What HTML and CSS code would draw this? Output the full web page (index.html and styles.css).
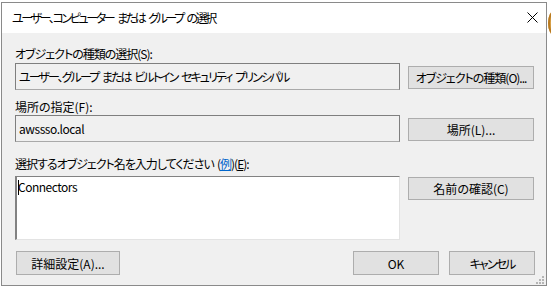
FILE: index.html
```html
<!DOCTYPE html>
<html lang="ja">
<head>
  <meta charset="UTF-8">
  <title>ユーザー、コンピューター または グループ の選択</title>
  <link rel="stylesheet" href="styles.css">
</head>
<body>

  <div class="dialogo">
    <div class="barra-titulo">
      <span class="titulo">ユーザー、コンピューター または グループ の選択</span>
      <svg class="cerrar" width="11" height="11" viewBox="0 0 11 11">
        <path d="M0.5 0.5 L10.5 10.5 M10.5 0.5 L0.5 10.5" stroke="#000" stroke-width="1" fill="none"/>
      </svg>
    </div>

    <div class="cuerpo">
      <div class="etiqueta etiqueta-1">オブジェクトの種類の選択(S):</div>
      <div class="fila">
        <div class="campo campo-tipo">ユーザー、グループ または ビルトイン セキュリティ プリンシパル</div>
        <button class="boton boton-lado boton-tipo">オブジェクトの種類(O)...</button>
      </div>

      <div class="etiqueta etiqueta-2">場所の指定(F):</div>
      <div class="fila">
        <div class="campo campo-latin">awssso.local</div>
        <button class="boton boton-lado">場所(L)...</button>
      </div>

      <div class="etiqueta etiqueta-3">選択するオブジェクト名を入力してください (<a class="enlace">例</a>)(<u>E</u>):</div>
      <div class="fila">
        <div class="area"><span class="cursor"></span>Connectors</div>
        <button class="boton boton-lado boton-nombre">名前の確認(C)</button>
      </div>

      <div class="pie">
        <button class="boton boton-detalle">詳細設定(A)...</button>
        <div class="pie-derecha">
          <button class="boton boton-ok">OK</button>
          <button class="boton boton-ok boton-cancelar">キャンセル</button>
        </div>
      </div>

      <svg class="agarre" width="8" height="8" viewBox="0 0 8 8">
        <rect x="6" y="0" width="2" height="2" fill="#b5b5b5"/>
        <rect x="3" y="3" width="2" height="2" fill="#b5b5b5"/>
        <rect x="6" y="3" width="2" height="2" fill="#b5b5b5"/>
        <rect x="0" y="6" width="2" height="2" fill="#b5b5b5"/>
        <rect x="3" y="6" width="2" height="2" fill="#b5b5b5"/>
        <rect x="6" y="6" width="2" height="2" fill="#b5b5b5"/>
      </svg>
    </div>
  </div>

  <div class="icono-fondo"></div>

</body>
</html>
```

FILE: styles.css
```css
/* --- General --- */
body {
  font-family: "Noto Sans CJK JP", "Noto Sans", sans-serif;
  font-size: 12px;
  font-feature-settings: "palt";
  color: #000;
  background: #fff;
  margin: 0;
  position: relative;
  height: 289px;
  overflow: hidden;
}

/* --- Ventana --- */
.dialogo {
  margin: 2px 0 0 1px;
  width: 546px;
  height: 284px;
  box-sizing: border-box;
  border: 1px solid #8a8a8a;
  display: flex;
  flex-direction: column;
}

.barra-titulo {
  height: 30px;
  background: #fff;
  display: flex;
  align-items: center;
  padding: 0 0 1px 10px;
  box-sizing: border-box;
}
/* la fuente de Windows tiene katakana mas estrechas: se compensa con letter-spacing */
.titulo {
  letter-spacing: -2.4px;
  word-spacing: 3.5px;
  white-space: nowrap;
}
.cerrar {
  margin-left: auto;
  margin-right: 8px;
}

.cuerpo {
  flex: 1;
  background: #f0f0f0;
  padding: 13px 11px 0 13px;
  position: relative;
}

.etiqueta {
  line-height: 16px;
  height: 16px;
  margin-bottom: 1px;
  white-space: nowrap;
}
.etiqueta-1 {
  letter-spacing: -1px;
}
.etiqueta-2 {
  margin-top: 9px;
  margin-bottom: 0;
}
.etiqueta-3 {
  margin-top: 14px;
  margin-bottom: 4px;
  letter-spacing: -1px;
  word-spacing: 1.5px;
}
.enlace {
  color: #0066cc;
  text-decoration: underline;
}

.fila {
  display: flex;
  align-items: flex-start;
  gap: 8px;
}

.campo {
  width: 385px;
  height: 27px;
  box-sizing: border-box;
  border: 1px solid #7f7f7f;
  border-bottom-color: #a9a9a9;
  background: #f0f0f0;
  line-height: 25px;
  padding-left: 3px;
  white-space: nowrap;
  overflow: hidden;
}
.campo-tipo {
  letter-spacing: -1.95px;
  word-spacing: 3px;
}
.campo-latin {
  letter-spacing: -0.45px;
}

.area {
  width: 385px;
  height: 64px;
  box-sizing: border-box;
  border: 1px solid #e3e3e3;
  border-top-color: #828282;
  border-left: 2px solid #828282;
  background: #fff;
  line-height: 17px;
  padding: 1px 0 0 1px;
  letter-spacing: -0.5px;
}
.cursor {
  display: inline-block;
  width: 1px;
  height: 15px;
  background: #000;
  vertical-align: -3px;
  margin-right: -1px;
}

/* --- Botones --- */
.boton {
  font-family: inherit;
  font-size: 12px;
  font-feature-settings: "palt";
  color: #000;
  background: #e1e1e1;
  border: 1px solid #adadad;
  padding: 0;
  margin: 0;
  height: 24px;
  box-sizing: border-box;
  white-space: nowrap;
}
.boton-lado {
  width: 126px;
  height: 23px;
  margin-top: 3px;
}
.boton-tipo {
  letter-spacing: -1px;
}
.boton-nombre {
  margin-top: 1px;
}

.pie {
  display: flex;
  justify-content: space-between;
  margin-top: 11px;
}
.boton-detalle {
  width: 104px;
  margin-left: 1px;
}
.pie-derecha {
  display: flex;
  gap: 10px;
}
.boton-ok {
  width: 86px;
}
.boton-cancelar {
  letter-spacing: -1.9px;
}

.agarre {
  position: absolute;
  right: 2px;
  bottom: 1px;
}

/* --- Icono detras de la ventana --- */
.icono-fondo {
  position: absolute;
  left: 548px;
  top: 11px;
  width: 12px;
  height: 24px;
  border-radius: 50%;
  background: #d9a24a;
  box-shadow: inset 2px 0 0 #b97a1f;
}
```
